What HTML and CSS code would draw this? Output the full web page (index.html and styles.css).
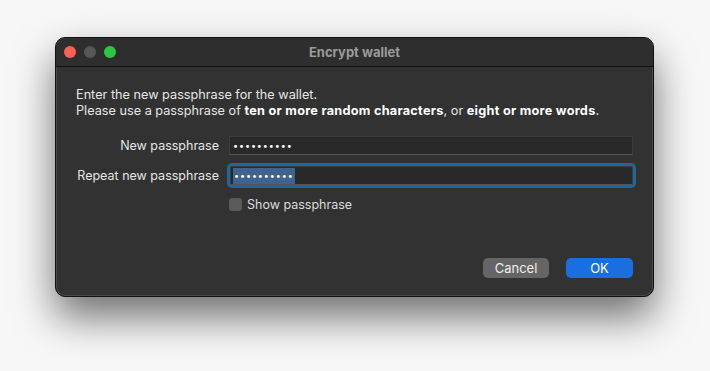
FILE: index.html
```html
<!DOCTYPE html>
<html lang="en">
<head>
  <meta charset="UTF-8" />
  <title>Encrypt wallet</title>
  <link rel="stylesheet" href="styles.css">
</head>
<body>
  <div class="window">
    <div class="titlebar">
      <div class="lights">
        <span class="light red"></span>
        <span class="light gray"></span>
        <span class="light green"></span>
      </div>
      <div class="title">Encrypt wallet</div>
    </div>

    <div class="content">
      <p class="intro">
        Enter the new passphrase for the wallet.<br>
        Please use a passphrase of <b>ten or more random characters</b>, or <b>eight or more words</b>.
      </p>

      <div class="form">
        <label class="lbl">New passphrase</label>
        <div class="field"><span class="dots">••••••••••</span></div>

        <label class="lbl">Repeat new passphrase</label>
        <div class="field focus"><span class="dots sel">••••••••••</span></div>

        <span></span>
        <div class="check"><span class="box"></span>Show passphrase</div>
      </div>

      <div class="buttons">
        <button class="btn cancel">Cancel</button>
        <button class="btn ok">OK</button>
      </div>
    </div>
  </div>
</body>
</html>
```

FILE: styles.css
```css
* { box-sizing: border-box; margin: 0; padding: 0; }
body {
  background: #f7f7f7;
  font-family: Inter, "Liberation Sans", sans-serif;
  font-size: 13px;
  color: #e6e6e6;
  padding: 37px 0 0 55px;
  height: 371px;
  overflow: hidden;
}

.window {
  width: 599px;
  height: 260px;
  background: #323232;
  border-radius: 10px;
  border: 1px solid #111;
  box-shadow: inset 0 0 0 1px #4a4a4a, 0 20px 40px rgba(0,0,0,0.55);
  display: flex;
  flex-direction: column;
  overflow: hidden;
}

.titlebar {
  height: 29px;
  border-bottom: 1px solid #111;
  display: flex;
  align-items: center;
  position: relative;
  background: #2e2e2e;
}
.lights { display: flex; gap: 8px; padding-left: 8px; }
.light { width: 12px; height: 12px; border-radius: 50%; display: block; }
.red { background: #fe5f57; }
.gray { background: #575757; }
.green { background: #28c840; }
.title {
  position: absolute;
  left: 0; right: 0;
  text-align: center;
  font-weight: 700;
  color: #9b9b9b;
  font-size: 13px;
}

.content { padding: 20px 20px 0 20px; flex: 1; display: flex; flex-direction: column; }
.intro { line-height: 16px; font-size: 12.7px; }
.intro b { font-weight: 700; color: #fff; letter-spacing: 0.27px; }

.form {
  margin-top: 17px;
  display: grid;
  grid-template-columns: 143px 404px;
  column-gap: 10px;
  row-gap: 11px;
  align-items: center;
}
.lbl { text-align: right; font-size: 12.5px; }

.field {
  height: 19px;
  background: #292929;
  border: 1px solid #3c3c3c;
  border-bottom-color: #555;
  display: flex;
  align-items: center;
  padding-left: 2px;
}
.field.focus {
  box-shadow: 0 0 0 3px #1f6699;
  border-radius: 2px;
  width: 403px;
  margin-left: 1px;
}
.dots { font-size: 9px; letter-spacing: 0.9px; color: #fff; line-height: 16px; padding: 0 1px; }
.dots.sel { background: #3f638e; }

.check { display: flex; align-items: center; gap: 5px; margin-top: 1px; color: #dcdcdc; font-size: 12.5px; }
.box {
  width: 13px; height: 13px;
  background: #5a5a5a;
  border-radius: 3px;
  display: block;
}

.buttons {
  margin-top: auto;
  margin-bottom: 18px;
  display: flex;
  justify-content: flex-end;
  gap: 17px;
}
.btn {
  height: 20px;
  width: 67px;
  border: none;
  border-radius: 5px;
  color: #eee;
  font-family: inherit;
  font-size: 13px;
}
.cancel { background: #656565; width: 66px; }
.ok { background: #1a6fe0; color: #fff; }
```
